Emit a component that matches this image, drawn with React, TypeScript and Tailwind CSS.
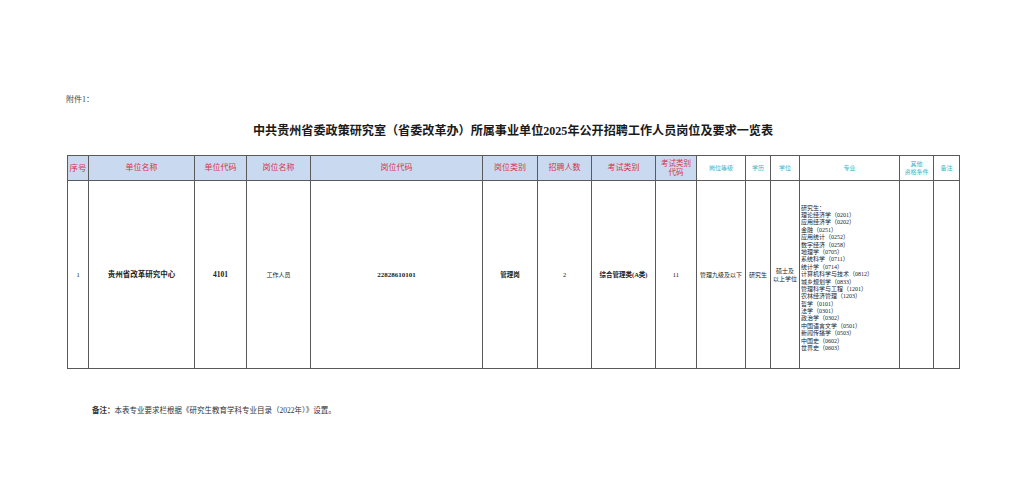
import React from "react";

const cols = [21, 106, 52, 64, 172, 55, 54, 64, 41, 49, 25, 29, 100, 34, 26];

const majors = [
  "研究生：",
  "理论经济学（0201）",
  "应用经济学（0202）",
  "金融（0251）",
  "应用统计（0252）",
  "数字经济（0258）",
  "地理学（0705）",
  "系统科学（0711）",
  "统计学（0714）",
  "计算机科学与技术（0812）",
  "城乡规划学（0833）",
  "管理科学与工程（1201）",
  "农林经济管理（1203）",
  "哲学（0101）",
  "法学（0301）",
  "政治学（0302）",
  "中国语言文学（0501）",
  "新闻传播学（0503）",
  "中国史（0602）",
  "世界史（0603）",
];

const serif = { fontFamily: '"Liberation Serif", "Noto Sans CJK SC", serif' };

export default function App() {
  const redTh =
    "border border-[#5a5a5a] bg-[#c9daf0] text-[#d8344a] font-normal text-center align-middle p-0";
  const cyanTh =
    "border border-[#5a5a5a] bg-white text-[#39b4c6] text-[6px] font-normal text-center align-middle leading-[8px] p-0";
  const td = "border border-[#5a5a5a] text-[#222] align-middle p-0";
  return (
    <div className="w-[1036px] h-[500px] bg-white overflow-hidden" style={serif}>
      <div className="pt-[94px] pl-[66px] h-[106px] text-[8px] leading-[12px] text-[#444]">
        附件1：
      </div>
      <div className="ml-[67px] w-[892px]">
        <div className="mt-[17px] h-[16px] leading-[16px] text-center text-[12.1px] font-bold text-[#1a1a1a]">
          中共贵州省委政策研究室（省委改革办）所属事业单位2025年公开招聘工作人员岗位及要求一览表
        </div>
        <table className="mt-[16px] w-[892px] table-fixed border-collapse border border-[#4a4a4a]">
          <colgroup>
            {cols.map((w, i) => (
              <col key={i} style={{ width: w }} />
            ))}
          </colgroup>
          <thead>
            <tr className="h-[25px]">
              <th className={redTh + " text-[8.5px] leading-[10px] font-bold"}>序号</th>
              <th className={redTh + " text-[8px] leading-[10px]"}>单位名称</th>
              <th className={redTh + " text-[8px] leading-[10px]"}>单位代码</th>
              <th className={redTh + " text-[8px] leading-[10px]"}>岗位名称</th>
              <th className={redTh + " text-[8px] leading-[10px]"}>岗位代码</th>
              <th className={redTh + " text-[8px] leading-[10px]"}>岗位类别</th>
              <th className={redTh + " text-[8px] leading-[10px]"}>招聘人数</th>
              <th className={redTh + " text-[8px] leading-[10px]"}>考试类别</th>
              <th className={redTh + " text-[7.5px] leading-[9px]"}>
                考试类别
                <br />
                代码
              </th>
              <th className={cyanTh}>岗位等级</th>
              <th className={cyanTh}>学历</th>
              <th className={cyanTh}>学位</th>
              <th className={cyanTh}>专业</th>
              <th className={cyanTh}>
                其他
                <br />
                资格条件
              </th>
              <th className={cyanTh}>备注</th>
            </tr>
          </thead>
          <tbody>
            <tr className="h-[188px]">
              <td className={td + " text-center text-[6.5px] leading-[8px]"}>1</td>
              <td className={td + " text-center text-[7.5px] leading-[8px] font-bold"}>贵州省改革研究中心</td>
              <td className={td + " text-center text-[7.5px] leading-[8px] font-bold"}>4101</td>
              <td className={td + " text-center text-[6px] leading-[8px]"}>工作人员</td>
              <td className={td + " text-center text-[7px] leading-[8px] font-bold"}>22828610101</td>
              <td className={td + " text-center text-[6.5px] leading-[8px] font-bold"}>管理岗</td>
              <td className={td + " text-center text-[6.5px] leading-[8px]"}>2</td>
              <td className={td + " text-center text-[6.5px] leading-[8px] font-bold"}>综合管理类(A类)</td>
              <td className={td + " text-center text-[6.5px] leading-[8px]"}>11</td>
              <td className={td + " text-center text-[6px] leading-[8px]"}>管理九级及以下</td>
              <td className={td + " text-center text-[6px] leading-[8px]"}>研究生</td>
              <td className={td + " text-center text-[6px] leading-[8px]"}>
                硕士及
                <br />
                以上学位
              </td>
              <td className={td + " text-left text-[6px] pl-[1px] pt-[8px]"}>
                {majors.map((m, i) => (
                  <div key={i} className="whitespace-nowrap h-[7.4px] leading-[7.4px]">
                    {m}
                  </div>
                ))}
              </td>
              <td className={td}></td>
              <td className={td}></td>
            </tr>
          </tbody>
        </table>
      </div>
      <div className="mt-[36px] pl-[92px] h-[12px] leading-[12px] text-[7.5px] text-[#333]">
        <span className="font-bold">备注：</span>本表专业要求栏根据《研究生教育学科专业目录（2022年）》设置。
      </div>
    </div>
  );
}
